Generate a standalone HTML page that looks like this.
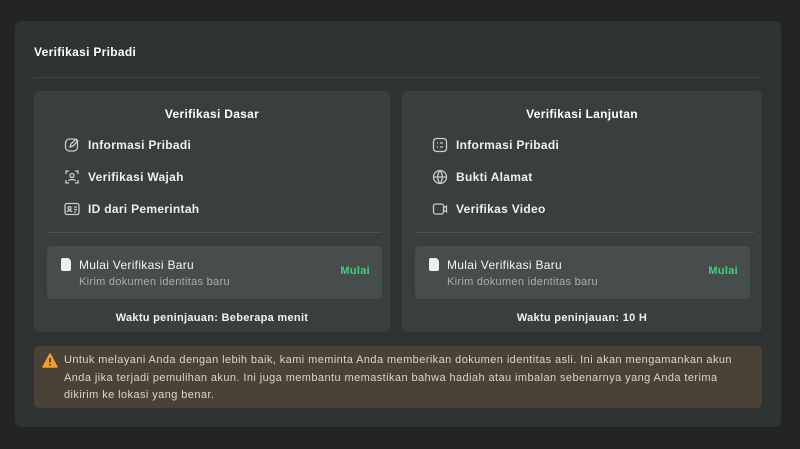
<!DOCTYPE html>
<html><head><style>
*{margin:0;padding:0;box-sizing:border-box}
body{width:800px;height:449px;background:#232525;font-family:"Liberation Sans",sans-serif;color:#e8eaea;position:relative;overflow:hidden;letter-spacing:0.3px}
.card{position:absolute;left:15px;top:21px;width:766px;height:406px;background:#2f3333;border-radius:6px}
.title{position:absolute;left:34px;top:45px;font-size:12px;font-weight:bold;color:#fff}
.div{position:absolute;left:34px;top:77px;width:728px;height:1px;background:#3f4545}
.panel{position:absolute;top:91px;width:356px;height:241px;background:#393e3e;border-radius:5px}
.ph{position:absolute;top:16px;width:100%;text-align:center;font-size:12px;font-weight:bold;color:#fff}
.it{position:absolute;left:30px;font-size:12px;font-weight:bold;color:#eef0f0;display:flex;align-items:center}
.it svg{width:16px;height:16px;margin-right:8px}
.hl{position:absolute;left:13px;right:8px;top:141px;height:1px;background:#4c5252}
.box{position:absolute;left:13px;width:335px;top:155px;height:53px;background:#474c4c;border-radius:4px}
.bt{position:absolute;left:32px;top:12px;font-size:12px;color:#f2f4f4}
.bs{position:absolute;left:32px;top:30px;font-size:11px;color:#a9afaf}
.bi{position:absolute;left:14px;top:12px;width:10px;height:13px;background:#eef0f0;border-radius:2px 4px 2px 2px}
.go{position:absolute;right:12px;top:19px;font-size:11px;font-weight:bold;color:#3ad27a}
.ft{position:absolute;top:221px;width:100%;text-align:center;font-size:11px;font-weight:bold;color:#f0f2f2}
.warn{position:absolute;left:34px;top:346px;width:728px;height:62px;background:#4a4137;border-radius:5px}
.wt{position:absolute;left:30px;top:6px;right:12px;font-size:11px;line-height:17.5px;color:#d9d6cf;letter-spacing:0.42px}
</style></head><body>
<div class="card"></div>
<div class="title">Verifikasi Pribadi</div>
<div class="div"></div>

<div class="panel" style="left:34px">
<div class="ph">Verifikasi Dasar</div>
<div class="it" style="top:46px"><svg viewBox="0 0 16 16" fill="none" stroke="#c8cccc" stroke-width="1.3"><rect x="1.5" y="2" width="12" height="12" rx="4"/><path d="M6 10l1-3 5-5 2 2-5 5z"/></svg>Informasi Pribadi</div>
<div class="it" style="top:78px"><svg viewBox="0 0 16 16" fill="none" stroke="#c8cccc" stroke-width="1.3"><path d="M2 5V2h3M11 2h3v3M14 11v3h-3M5 14H2v-3"/><circle cx="8" cy="6.5" r="2"/><path d="M4.5 12c1-2 6-2 7 0"/></svg>Verifikasi Wajah</div>
<div class="it" style="top:110px"><svg viewBox="0 0 16 16" fill="none" stroke="#c8cccc" stroke-width="1.3"><rect x="1" y="2.5" width="14" height="11" rx="2"/><circle cx="5.5" cy="7" r="1.5"/><path d="M3 11c1-2 4-2 5 0M10 6h3M10 8.5h3M10 11h2"/></svg>ID dari Pemerintah</div>
<div class="hl"></div>
<div class="box"><div class="bi"></div><div class="bt">Mulai Verifikasi Baru</div><div class="bs">Kirim dokumen identitas baru</div><div class="go">Mulai</div></div>
<div class="ft">Waktu peninjauan: Beberapa menit</div>
</div>

<div class="panel" style="left:402px;width:360px">
<div class="ph">Verifikasi Lanjutan</div>
<div class="it" style="top:46px"><svg viewBox="0 0 16 16" fill="none" stroke="#c8cccc" stroke-width="1.3"><rect x="1.5" y="1.5" width="13" height="13" rx="3"/><path d="M5 6h1M8 6h3M5 10h1M8 10h3"/></svg>Informasi Pribadi</div>
<div class="it" style="top:78px"><svg viewBox="0 0 16 16" fill="none" stroke="#c8cccc" stroke-width="1.3"><circle cx="8" cy="8" r="6.5"/><path d="M1.5 8h13M8 1.5c-3 3-3 10 0 13M8 1.5c3 3 3 10 0 13"/></svg>Bukti Alamat</div>
<div class="it" style="top:110px"><svg viewBox="0 0 16 16" fill="none" stroke="#c8cccc" stroke-width="1.3"><rect x="1.5" y="3" width="10" height="10" rx="2"/><path d="M11.5 7l3-2v6l-3-2"/></svg>Verifikas Video</div>
<div class="hl"></div>
<div class="box"><div class="bi"></div><div class="bt">Mulai Verifikasi Baru</div><div class="bs">Kirim dokumen identitas baru</div><div class="go">Mulai</div></div>
<div class="ft">Waktu peninjauan: 10 H</div>
</div>

<div class="warn">
<svg style="position:absolute;left:8px;top:7px" width="16" height="15" viewBox="0 0 16 15"><path d="M8 1L15 14H1z" fill="#f0a030" stroke="#f0a030" stroke-linejoin="round" stroke-width="1.5"/><path d="M8 5v4.5" stroke="#4a4137" stroke-width="1.8"/><circle cx="8" cy="11.8" r="1" fill="#4a4137"/></svg>
<div class="wt">Untuk melayani Anda dengan lebih baik, kami meminta Anda memberikan dokumen identitas asli. Ini akan mengamankan akun<br>Anda jika terjadi pemulihan akun. Ini juga membantu memastikan bahwa hadiah atau imbalan sebenarnya yang Anda terima<br>dikirim ke lokasi yang benar.</div>
</div>
</body></html>
